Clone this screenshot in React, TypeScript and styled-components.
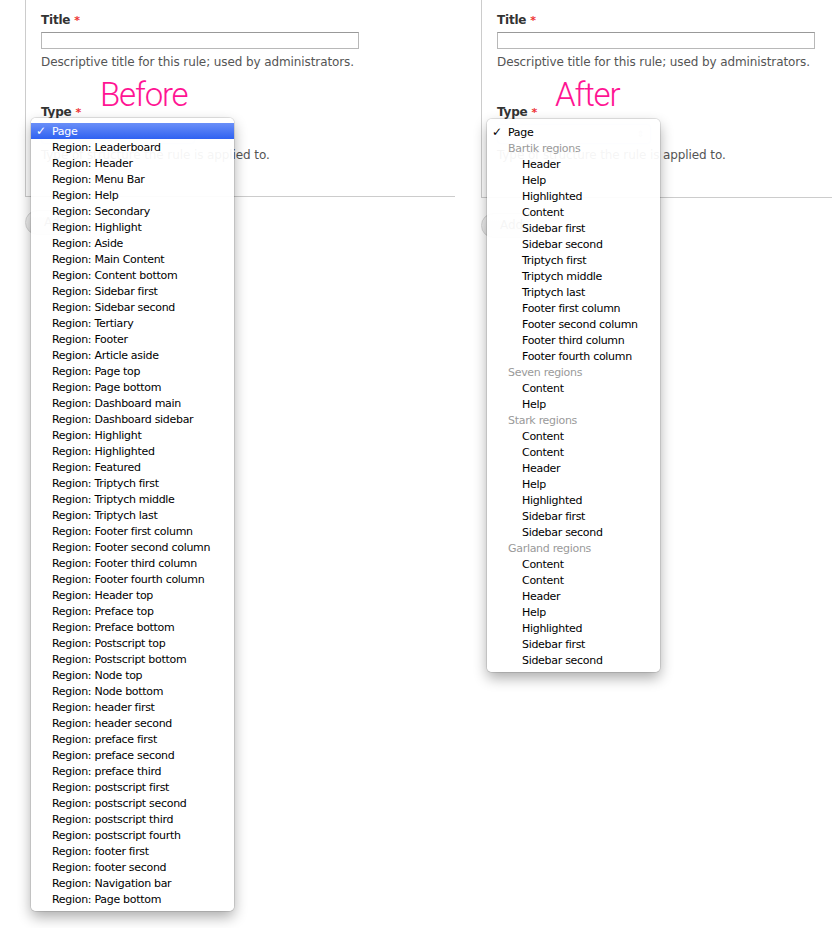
import React from 'react'
import styled, { createGlobalStyle } from 'styled-components'

const GlobalStyle = createGlobalStyle`
  html, body {
    margin: 0;
    padding: 0;
    background: #fff;
  }
  body {
    font-family: "DejaVu Sans", "Noto Sans", sans-serif;
    color: #333;
  }
`

const Page = styled.div`
  display: flex;
  width: 832px;
  height: 928px;
  overflow: hidden;
`

const Shot = styled.div<{ $width: number; $indent: number }>`
  position: relative;
  flex: 0 0 ${(p) => p.$width}px;
  padding-left: ${(p) => p.$indent}px;
  box-sizing: border-box;
`

const Fieldset = styled.div<{ $bottom: number }>`
  border-left: 1px solid #ccc;
  border-bottom: 1px solid #ccc;
  padding: 13px 0 ${(p) => p.$bottom}px 15px;
`

const Label = styled.div<{ $top?: number }>`
  margin-top: ${(p) => p.$top || 0}px;
  font-size: 12px;
  line-height: 14px;
  font-weight: bold;
  color: #333;
  letter-spacing: -0.2px;
`

const Required = styled.span`
  color: #e33;
  margin-left: 4px;
  font-size: 11px;
`

const TextInput = styled.div`
  margin-top: 4px;
  width: 318px;
  height: 17px;
  box-sizing: border-box;
  border: 1px solid #b8b8b8;
  border-top-color: #999;
  background: #fff;
`

const Description = styled.div<{ $top: number }>`
  margin-top: ${(p) => p.$top}px;
  font-size: 12px;
  line-height: 14px;
  color: #555;
  letter-spacing: -0.1px;
  white-space: nowrap;
`

const SelectBox = styled.div`
  margin-top: 4px;
  width: 154px;
  height: 20px;
  box-sizing: border-box;
  border: 1px solid #d6def5;
  border-radius: 4px;
  background: #f6f8ff;
  box-shadow: 0 0 3px rgba(110, 150, 240, 0.35);
  display: flex;
  align-items: center;
  justify-content: flex-end;
  padding-right: 6px;
  font-size: 9px;
  color: #bbb;
`

const Button = styled.div<{ $top: number }>`
  margin-top: ${(p) => p.$top}px;
  width: 70px;
  height: 25px;
  box-sizing: border-box;
  border: 1px solid #d4d4d4;
  border-radius: 13px;
  background: linear-gradient(#f4f4f4, #e4e4e4);
  font-size: 12px;
  line-height: 23px;
  padding-left: 18px;
  color: #555;
`

const Annotation = styled.div<{ $left: number }>`
  position: absolute;
  left: ${(p) => p.$left}px;
  top: 76px;
  font-family: Roboto, "Liberation Sans", sans-serif;
  font-weight: 300;
  font-size: 33px;
  line-height: 38px;
  letter-spacing: -1.2px;
  color: #ff1493;
`

const Menu = styled.ul<{ $left: number; $top: number; $width: number }>`
  position: absolute;
  left: ${(p) => p.$left}px;
  top: ${(p) => p.$top}px;
  width: ${(p) => p.$width}px;
  margin: 0;
  padding: 5px 0 4px;
  list-style: none;
  box-sizing: border-box;
  background: rgba(255, 255, 255, 0.94);
  border-radius: 5px;
  box-shadow: 0 6px 14px rgba(0, 0, 0, 0.33), 0 0 0 1px rgba(0, 0, 0, 0.1);
`

const Option = styled.li<{ $selected?: boolean; $group?: boolean; $nested?: boolean }>`
  position: relative;
  height: 16px;
  line-height: 17px;
  overflow: visible;
  padding-left: ${(p) => (p.$nested ? 35 : 21)}px;
  font-size: 11px;
  letter-spacing: -0.3px;
  white-space: nowrap;
  color: ${(p) => (p.$group ? '#9a9a9a' : p.$selected ? '#fff' : '#000')};
  background: ${(p) => (p.$selected ? 'linear-gradient(#6a8ff8, #2f62f1)' : 'none')};
`

const Check = styled.span<{ $light?: boolean }>`
  position: absolute;
  left: 5px;
  top: 0;
  font-size: 12px;
  font-weight: bold;
  color: ${(p) => (p.$light ? '#fff' : '#000')};
`

const beforeRegions = [
  'Leaderboard', 'Header', 'Menu Bar', 'Help', 'Secondary', 'Highlight', 'Aside',
  'Main Content', 'Content bottom', 'Sidebar first', 'Sidebar second', 'Tertiary',
  'Footer', 'Article aside', 'Page top', 'Page bottom', 'Dashboard main',
  'Dashboard sidebar', 'Highlight', 'Highlighted', 'Featured', 'Triptych first',
  'Triptych middle', 'Triptych last', 'Footer first column', 'Footer second column',
  'Footer third column', 'Footer fourth column', 'Header top', 'Preface top',
  'Preface bottom', 'Postscript top', 'Postscript bottom', 'Node top', 'Node bottom',
  'header first', 'header second', 'preface first', 'preface second', 'preface third',
  'postscript first', 'postscript second', 'postscript third', 'postscript fourth',
  'footer first', 'footer second', 'Navigation bar', 'Page bottom',
]

const afterGroups: { name: string; regions: string[] }[] = [
  {
    name: 'Bartik regions',
    regions: [
      'Header', 'Help', 'Highlighted', 'Content', 'Sidebar first', 'Sidebar second',
      'Triptych first', 'Triptych middle', 'Triptych last', 'Footer first column',
      'Footer second column', 'Footer third column', 'Footer fourth column',
    ],
  },
  { name: 'Seven regions', regions: ['Content', 'Help'] },
  {
    name: 'Stark regions',
    regions: ['Content', 'Content', 'Header', 'Help', 'Highlighted', 'Sidebar first', 'Sidebar second'],
  },
  {
    name: 'Garland regions',
    regions: ['Content', 'Content', 'Header', 'Help', 'Highlighted', 'Sidebar first', 'Sidebar second'],
  },
]

function RuleForm({ note, noteLeft, bottom, buttonTop }: {
  note: string
  noteLeft: number
  bottom: number
  buttonTop: number
}) {
  return (
    <>
      <Fieldset $bottom={bottom}>
        <Label>
          Title<Required>*</Required>
        </Label>
        <TextInput />
        <Description $top={6}>Descriptive title for this rule; used by administrators.</Description>
        <Label $top={36}>
          Type<Required>*</Required>
        </Label>
        <SelectBox>⇕</SelectBox>
        <Description $top={4}>Type of structure the rule is applied to.</Description>
      </Fieldset>
      <Button $top={buttonTop}>Add</Button>
      <Annotation $left={noteLeft}>{note}</Annotation>
    </>
  )
}

export default function App() {
  return (
    <Page>
      <GlobalStyle />
      <Shot $width={455} $indent={25}>
        <RuleForm note="Before" noteLeft={100} bottom={34} buttonTop={13} />
        <Menu $left={31} $top={118} $width={203}>
          <Option $selected>
            <Check $light>✓</Check>
            Page
          </Option>
          {beforeRegions.map((r, i) => (
            <Option key={i}>Region: {r}</Option>
          ))}
        </Menu>
      </Shot>
      <Shot $width={377} $indent={26}>
        <RuleForm note="After" noteLeft={100} bottom={35} buttonTop={15} />
        <Menu $left={32} $top={119} $width={173}>
          <Option>
            <Check>✓</Check>
            Page
          </Option>
          {afterGroups.map((g) => (
            <React.Fragment key={g.name}>
              <Option $group>{g.name}</Option>
              {g.regions.map((r, i) => (
                <Option key={i} $nested>{r}</Option>
              ))}
            </React.Fragment>
          ))}
        </Menu>
      </Shot>
    </Page>
  )
}
